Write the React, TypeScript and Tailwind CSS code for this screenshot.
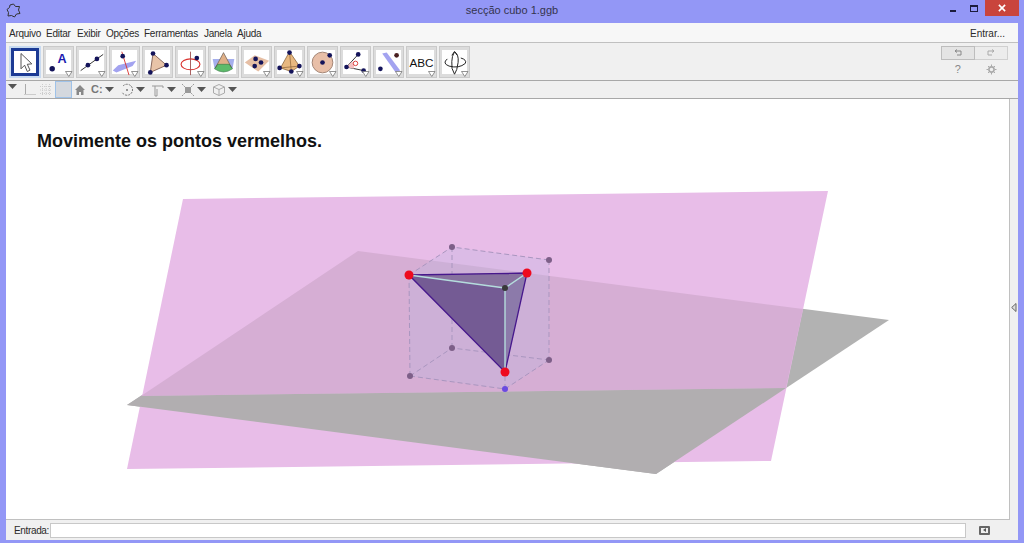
import React from "react";

const P = ({ x, y, r = 2.6, c = "#14145a" }: { x: number; y: number; r?: number; c?: string }) => <circle cx={x} cy={y} r={r} fill={c} />;

const icons: React.ReactNode[] = [
  <path key="a" d="M10 5 L10 22 L14 18 L17 25 L20 23.5 L17 17 L22 16.5 Z" fill="#fff" stroke="#444" strokeWidth="1" />,
  <g key="b"><P x={8} y={22} r={3} /><text x="14" y="15" fontSize="14" fontWeight="700" fontFamily="Liberation Sans" fill="#1a1ab0">A</text></g>,
  <g key="c"><line x1="3" y1="24" x2="28" y2="6" stroke="#222" strokeWidth="1" /><P x={11} y={18} /><P x={21} y={11} /></g>,
  <g key="d"><path d="M2 24 L8 18 L28 13 L24 19 L6 26 Z" fill="#a3a3f0" /><line x1="12" y1="3" x2="20" y2="29" stroke="#d9302c" strokeWidth="1" /><P x={13} y={8} /></g>,
  <g key="e"><path d="M10 5 L25 18 L7 26 Z" fill="#e8c4a8" stroke="#7a5a50" strokeWidth="1" /><P x={10} y={5} /><P x={25} y={18} /><P x={7} y={26} /></g>,
  <g key="f"><ellipse cx="15" cy="17" rx="10.5" ry="6" fill="none" stroke="#d9302c" strokeWidth="1.2" /><line x1="15" y1="3" x2="15" y2="29" stroke="#a05050" strokeWidth="1" /><P x={22} y={10} /></g>,
  <g key="g"><path d="M3 11 L27 11 L25 22 L5 22 Z" fill="#8f9be8" opacity=".8" /><path d="M15 4 L24 20 Q15 27 6 20 Z" fill="#e0b088" /><path d="M8.5 17 L21.5 17 L25 22 Q15 29 5 22 Z" fill="#5dbb6a" stroke="#3a7a48" strokeWidth=".7" /><path d="M15 4 L24 21 M15 4 L6 21" stroke="#444" strokeWidth=".6" /></g>,
  <g key="h"><path d="M2 15 L13 7 L29 13 L17 25 Z" fill="#e6bfa5" /><P x={14} y={11} /><P x={20} y={15} /><P x={13} y={19} /></g>,
  <g key="i"><path d="M15 3 L26 19 L17 25 L5 21 Z" fill="#e8b880" stroke="#805a30" strokeWidth=".8" /><path d="M15 3 L17 25 M5 21 L26 19" stroke="#805a30" strokeWidth=".7" /><P x={15} y={4} /><P x={26} y={19} /><P x={17} y={25} /><P x={4} y={21} /></g>,
  <g key="j"><circle cx="15" cy="15" r="11.5" fill="#e8bfa8" stroke="#9a7a6a" strokeWidth="1" /><P x={15} y={15} /><P x={23} y={7} /></g>,
  <g key="k"><path d="M5 20 L18 6 M5 20 L24 24" stroke="#222" strokeWidth="1" /><path d="M11 14 A8 8 0 0 1 13 22 L5 20 Z" fill="#f4c0c0" /><circle cx="15" cy="16" r="2.5" fill="none" stroke="#d9302c" /><P x={5} y={20} /><P x={18} y={6} /><P x={24} y={24} /></g>,
  <g key="l"><path d="M8 5 L13 4 L28 24 L23 26 Z" fill="#a3a3f0" /><P x={6} y={22} /><P x={24} y={7} c="#4a2020" /></g>,
  <text key="m" x="15" y="20" textAnchor="middle" fontSize="13" fontFamily="Liberation Sans" fill="#111">ABC</text>,
  <g key="n" fill="none" stroke="#222" strokeWidth="1.1"><path d="M15 3 Q20 6 19 15 Q18 24 15 28 Q11 22 12 14 Q12 8 15 3" /><path d="M7 11 Q1 16 9 19 Q20 22 27 16 Q29 12 22 10" /><path d="M15 3 L18 7 M15 3 L12 7" /></g>,
];

function Tool({ i }: { i: number }) {
  const selected = i === 0;
  return (
    <div className={selected ? "relative w-[32px] h-[32px] mr-[2px] flex items-center justify-center bg-[#c8daf0]" : "relative w-[31px] h-[32px] mr-[2px] flex items-center justify-center bg-[#dcdcdc] border border-[#cacaca]"}>
      <div className={selected ? "w-[28px] h-[28px] bg-white border-[3px] border-[#1c3a94] flex items-center justify-center" : "w-[25px] h-[24px] bg-white flex items-center justify-center"}>
        <svg width="27" height="27" viewBox="0 0 30 30" className="shrink-0 overflow-visible">{icons[i]}</svg>
      </div>
      {!selected && i !== 4 && i !== 6 && (
        <svg width="8" height="6" viewBox="0 0 8 6" className="absolute right-[0px] bottom-[0px]"><path d="M.5.5 H7 L3.8 5.5 Z" fill="#fff" stroke="#777" strokeWidth=".8" /></svg>
      )}
    </div>
  );
}

const Caret = () => (
  <svg width="9" height="5" viewBox="0 0 9 5" className="ml-[2px]"><path d="M0 0 H9 L4.5 5 Z" fill="#555" /></svg>
);

export default function App() {
  return (
    <div className="w-[1024px] h-[543px] flex flex-col bg-[#9397f6] overflow-hidden font-['Liberation_Sans',sans-serif] text-[#2a2a2a]">
      {/* title bar */}
      <div className="relative h-[23px] shrink-0 flex items-center justify-center">
        <svg width="15" height="15" viewBox="0 0 15 15" className="absolute left-[6px] top-[3px]"><path d="M7.5 1 L9.5 3.5 L13.5 3.5 L12.5 7 L14 10.5 L10.5 11 L8.5 14 L5.5 12.5 L2 13 L2.5 9.5 L1 6.5 L3.5 4.5 L4 2 Z" fill="none" stroke="#333" strokeWidth="1" /></svg>
        <span className="text-[11px] text-[#34344e] pb-[2px]">secção cubo 1.ggb</span>
        <div className="absolute right-[5px] top-0 flex items-start">
          <div className="w-[16px] h-[16px] relative mr-[8px]"><div className="absolute left-[5px] top-[10px] w-[6px] h-[2px] bg-[#1c1c3c]" /></div>
          <div className="w-[10px] h-[16px] flex items-center justify-center mr-[6px]"><div className="w-[8px] h-[7px] border border-[#1c1c3c] border-t-2" /></div>
          <div className="w-[34px] h-[16px] bg-[#c9443c] flex items-center justify-center">
            <svg width="8" height="8" viewBox="0 0 9 9"><path d="M1 1 L8 8 M8 1 L1 8" stroke="#fff" strokeWidth="1.8" /></svg>
          </div>
        </div>
      </div>

      <div className="flex-1 mx-[6px] mb-[3px] flex flex-col bg-[#f0f0f0] min-h-0">
        {/* menu */}
        <div className="h-[20px] shrink-0 flex items-center bg-[#f7f7f7] border-b border-[#c0c0c0] text-[10px] tracking-[-0.25px] pl-[3px] pt-[1px]">
          <span className="w-[37px]">Arquivo</span>
          <span className="w-[31px]">Editar</span>
          <span className="w-[29px]">Exibir</span>
          <span className="w-[38px]">Opções</span>
          <span className="w-[60px]">Ferramentas</span>
          <span className="w-[33px]">Janela</span>
          <span>Ajuda</span>
          <span className="ml-auto mr-[13px] tracking-normal">Entrar...</span>
        </div>
        {/* toolbar */}
        <div className="h-[38px] shrink-0 flex items-start pt-[3px] pl-[3px] border-b border-[#a8a8a8]">
          {icons.map((_, i) => <Tool key={i} i={i} />)}
          <div className="ml-auto mr-[10px] flex flex-col w-[67px]">
            <div className="flex h-[14px]">
              <div className="flex-1 bg-[#e4e4e4] border border-[#bdbdbd] flex items-center justify-center">
                <svg width="10" height="8" viewBox="0 0 10 8"><path d="M2 2 H8 V6 H4 M2 2 L4 .5 M2 2 L4 3.5" fill="none" stroke="#888" /></svg>
              </div>
              <div className="flex-1 bg-[#ececec] border border-l-0 border-[#d0d0d0] flex items-center justify-center">
                <svg width="10" height="8" viewBox="0 0 10 8"><path d="M8 2 H2 V6 H6 M8 2 L6 .5 M8 2 L6 3.5" fill="none" stroke="#aaa" /></svg>
              </div>
            </div>
            <div className="flex h-[16px] mt-[1px] items-center">
              <span className="flex-1 text-center text-[11px] text-[#888]">?</span>
              <div className="flex-1 flex justify-center">
                <svg width="11" height="11" viewBox="0 0 11 11"><circle cx="5.5" cy="5.5" r="2.6" fill="none" stroke="#aaa" strokeWidth="1.6" /><path d="M5.5 .5 V2 M5.5 9 V10.5 M.5 5.5 H2 M9 5.5 H10.5 M2 2 L3 3 M8 8 L9 9 M2 9 L3 8 M8 3 L9 2" stroke="#aaa" /></svg>
              </div>
            </div>
          </div>
        </div>
        {/* style bar */}
        <div className="h-[18px] shrink-0 flex items-center pl-[2px] border-b border-[#a8a8a8]">
          <svg width="9" height="5" viewBox="0 0 9 5" className="mb-[6px]"><path d="M0 0 H9 L4.5 5 Z" fill="#555" /></svg>
          <svg width="14" height="14" viewBox="0 0 14 14" className="ml-[6px]"><path d="M2.5 1 V11.5 H13" fill="none" stroke="#aaa" /><path d="M1 11.5 H13" stroke="#ccc" /></svg>
          <svg width="14" height="14" viewBox="0 0 14 14" className="ml-[2px]"><path d="M1 3.5 H13 M1 7 H13 M1 10.5 H13 M3.5 1 V13 M7 1 V13 M10.5 1 V13" stroke="#ccc" strokeDasharray="1 1" /></svg>
          <div className="w-[17px] h-[17px] ml-[2px] bg-[#d4d8de] border border-[#9fc2e8]" />
          <svg width="12" height="12" viewBox="0 0 12 12" className="ml-[2px]"><path d="M6 1 L11 6 H9.5 V11 H7 V8 H5 V11 H2.5 V6 H1 Z" fill="#888" /></svg>
          <span className="ml-[5px] text-[11px] font-bold text-[#777] leading-none">C:</span>
          <Caret />
          <svg width="14" height="14" viewBox="0 0 14 14" className="ml-[6px]"><path d="M3 3 A5.5 5.5 0 1 1 2 9" fill="none" stroke="#777" strokeDasharray="2 1" /><circle cx="7" cy="7" r="1" fill="#777" /></svg>
          <Caret />
          <svg width="14" height="14" viewBox="0 0 14 14" className="ml-[6px]"><path d="M1 3 H12 V5 M4 3 V13 H6 V6" fill="none" stroke="#999" /></svg>
          <Caret />
          <svg width="14" height="14" viewBox="0 0 14 14" className="ml-[5px]"><path d="M1 1 L13 13 M13 1 L1 13" stroke="#999" strokeDasharray="2 1" /><rect x="4" y="4" width="6" height="6" fill="#999" /></svg>
          <Caret />
          <svg width="14" height="14" viewBox="0 0 14 14" className="ml-[6px]"><path d="M1.5 4 L7 1.5 L12.5 4 V10 L7 12.5 L1.5 10 Z M1.5 4 L7 6.5 L12.5 4 M7 6.5 V12.5" fill="none" stroke="#aaa" /></svg>
          <Caret />
        </div>
        {/* main */}
        <div className="flex-1 flex min-h-0">
          <div className="relative flex-1 bg-white border-r border-b border-[#c0c0c0] overflow-hidden">
            <h1 className="relative z-10 ml-[31px] mt-[31px] text-[18px] leading-[22px] font-bold text-[#111]">Movimente os pontos vermelhos.</h1>
            <svg className="absolute left-0 top-0" width="1004" height="420" viewBox="6 99 1004 420">
              <polygon points="358,251 889,320 656,474 127,405" fill="#b2b2b2" />
              <polygon points="183,199 828,191 771,461 127,469" fill="#e8bde8" />
              <polygon points="358,251 803,309 786,388 141,396" fill="#d6aed4" />
              <polygon points="127,405 141,396 786,388 656,474" fill="#b1aeb0" />
              {/* cube translucent faces */}
              <polygon points="409,275 452,247 549,260 549,360 505,389 410,376" fill="#b4b6e0" fillOpacity=".26" />
              <g stroke="#a996bf" strokeWidth="1" strokeDasharray="5 3" fill="none">
                <path d="M409,275 L452,247 L549,260 M452,247 V348 M410,376 L452,348 L549,360 M549,260 V360 M410,376 L505,389 L549,360 M409,275 L410,376 M505,389 V372" />
              </g>
              {/* section */}
              <polygon points="409,275 505,288 505,372" fill="#745b94" />
              <polygon points="409,275 527,273 505,288" fill="#87719f" />
              <polygon points="527,273 505,372 505,288" fill="#8c7aaa" />
              <path d="M409,275 L527,273 L505,372 Z" fill="none" stroke="#47188c" strokeWidth="1.3" />
              <path d="M409,275 L505,288 M527,273 L505,288 M505,288 V372" stroke="#b4dcdc" strokeWidth="1.4" />
              <P x={452} y={247} r={3} c="#7d5f88" />
              <P x={549} y={260} r={3} c="#7d5f88" />
              <P x={452} y={348} r={3} c="#7d5f88" />
              <P x={549} y={360} r={3} c="#7d5f88" />
              <P x={410} y={376} r={3} c="#7d5f88" />
              <P x={505} y={288} r={3} c="#383838" />
              <P x={505} y={389} r={3} c="#6a4ae0" />
              <P x={409} y={275} r={4.5} c="#ee0a1e" />
              <P x={527} y={273} r={4.5} c="#ee0a1e" />
              <P x={505} y={372} r={4.5} c="#ee0a1e" />
            </svg>
          </div>
          <div className="w-[8px] shrink-0 flex items-center justify-center">
            <svg width="6" height="9" viewBox="0 0 6 9" className="mb-[4px]"><path d="M5 .5 V8.5 L.7 4.5 Z" fill="#ddd" stroke="#666" /></svg>
          </div>
        </div>
        {/* input */}
        <div className="h-[20px] shrink-0 flex items-center text-[10px] pl-[8px]">
          <span className="w-[36px] tracking-[-0.35px]">Entrada:</span>
          <div className="w-[916px] h-[15px] bg-white border border-[#c8c8c8]" />
          <div className="w-[11px] h-[9px] ml-[13px] border-2 border-[#666] rounded-[1px] flex items-center justify-center">
            <div className="w-0 h-0 border-y-[2px] border-y-transparent border-r-[3px] border-r-[#555]" />
          </div>
        </div>
      </div>
    </div>
  );
}
